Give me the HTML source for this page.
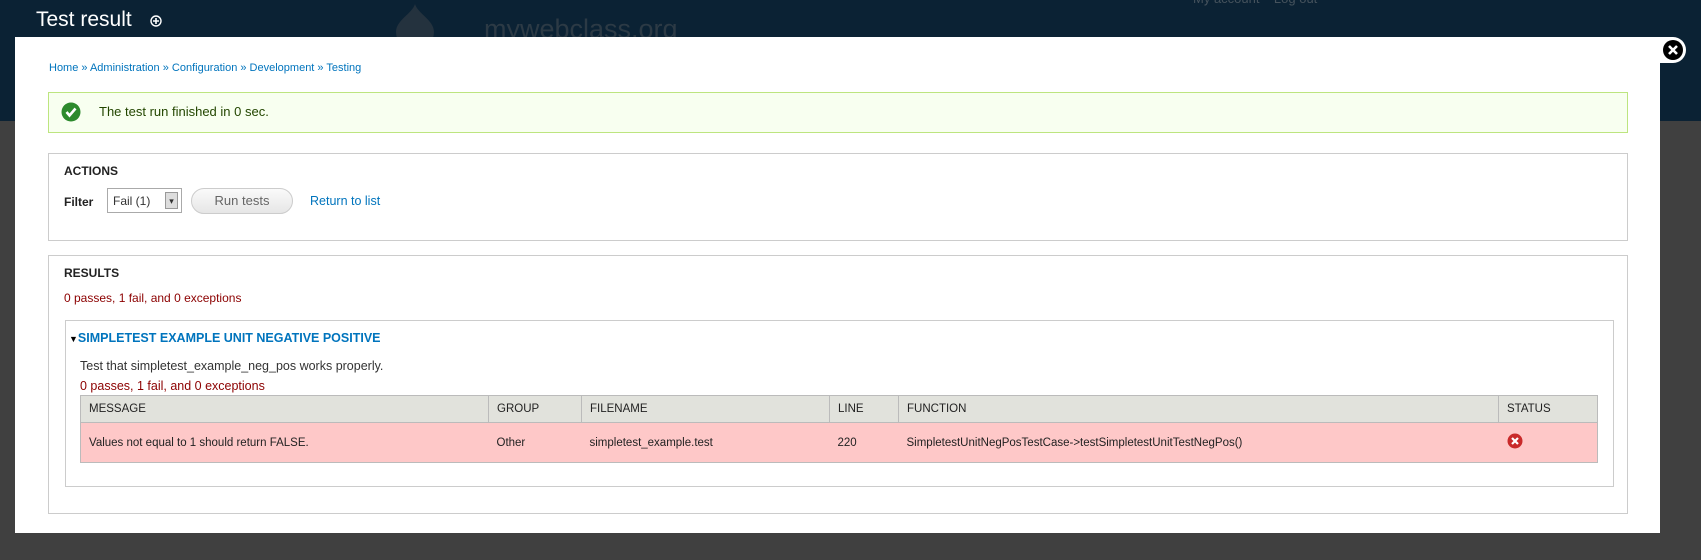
<!DOCTYPE html>
<html><head><meta charset="utf-8"><style>
*{box-sizing:border-box;margin:0;padding:0}
body{width:1701px;height:560px;overflow:hidden;background:#404040;font-family:"Liberation Sans","DejaVu Sans",sans-serif;position:relative}
.hdr{position:absolute;left:0;top:0;width:1701px;height:121px;background:#0b2234}
.abs{position:absolute;white-space:nowrap}
.dlg{position:absolute;left:15px;top:37px;width:1645px;height:496px;background:#fff}
a,.lnk{color:#0074bd;text-decoration:none}
.fs{position:absolute;border:1px solid #ccc}
.lg{font-size:12px;font-weight:bold;color:#222}
.red{color:#8c0000}
table{border-collapse:collapse;position:absolute;font-size:11.5px;color:#222}
td,th{border:1px solid #bbb;text-align:left;font-weight:normal;padding:0 8px}
th{background:#e1e2dc;height:27px}
td{background:#fec8c8;height:40px;border-left:none;border-right:none}
</style></head><body>
<div class="hdr"></div>
<div class="abs" style="left:36px;top:8px;font-size:21px;color:#fff">Test result</div>
<svg class="abs" style="left:150px;top:15px" width="12" height="12"><circle cx="6" cy="6" r="5" fill="none" stroke="#fff" stroke-width="1.4"/><path d="M6 3v6M3 6h6" stroke="#fff" stroke-width="1.6"/></svg>
<svg class="abs" style="left:392px;top:2px" width="46" height="40"><path d="M23 2C20 12 4 18 4 30a19 19 0 0 0 38 0C42 18 26 12 23 2z" fill="#24323e"/></svg>
<div class="abs" style="left:484px;top:14px;font-size:27px;color:#2c3a45">mywebclass.org</div>
<div class="abs" style="left:1193px;top:-9px;font-size:13px;color:#45525c">My account &nbsp;&nbsp; Log out</div>
<div class="dlg">
 <div class="abs" style="left:34px;top:25px;font-size:11px;color:#0074bd">Home » Administration » Configuration » Development » Testing</div>
 <div class="abs" style="left:33px;top:55px;width:1580px;height:41px;border:1px solid #bde57f;background:#f8fff0"></div>
 <svg class="abs" style="left:46px;top:65px" width="20" height="20"><circle cx="10" cy="10" r="9.5" fill="#2d8a2d"/><path d="M5.5 10l3 3.5 6-7" fill="none" stroke="#fff" stroke-width="2.6"/></svg>
 <div class="abs" style="left:84px;top:67px;font-size:13px;color:#234600">The test run finished in 0 sec.</div>
 <div class="fs" style="left:33px;top:116px;width:1580px;height:88px"></div>
 <div class="abs lg" style="left:49px;top:127px">ACTIONS</div>
 <div class="abs lg" style="left:49px;top:158px">Filter</div>
 <div class="abs" style="left:92px;top:151px;width:75px;height:25px;border:1px solid #aaa;font-size:12px;color:#333;padding:5px 5px">Fail (1)<span style="position:absolute;right:3px;top:3px;width:13px;height:17px;border:1px solid #999;background:#ddd;font-size:9px;text-align:center;line-height:16px">▾</span></div>
 <div class="abs" style="left:176px;top:151px;width:102px;height:26px;border:1px solid #ccc;border-radius:13px;background:linear-gradient(#fafafa,#e6e6e6);font-size:13px;color:#666;text-align:center;line-height:24px">Run tests</div>
 <div class="abs lnk" style="left:295px;top:157px;font-size:12.5px">Return to list</div>
 <div class="fs" style="left:33px;top:218px;width:1580px;height:259px"></div>
 <div class="abs lg" style="left:49px;top:229px">RESULTS</div>
 <div class="abs red" style="left:49px;top:254px;font-size:12px">0 passes, 1 fail, and 0 exceptions</div>
 <div class="fs" style="left:50px;top:283px;width:1549px;height:167px"></div>
 <div class="abs" style="left:54px;top:294px;font-size:12.5px;font-weight:bold;color:#0074bd"><span style="color:#000;font-size:9px">▼</span>SIMPLETEST EXAMPLE UNIT NEGATIVE POSITIVE</div>
 <div class="abs" style="left:65px;top:322px;font-size:12.5px;color:#333">Test that simpletest_example_neg_pos works properly.</div>
 <div class="abs red" style="left:65px;top:342px;font-size:12.5px">0 passes, 1 fail, and 0 exceptions</div>
 <table style="left:65px;top:358px;width:1518px">
  <tr><th style="width:408px">MESSAGE</th><th style="width:93px">GROUP</th><th style="width:248px">FILENAME</th><th style="width:69px">LINE</th><th style="width:600px">FUNCTION</th><th>STATUS</th></tr>
  <tr><td style="border-left:1px solid #bbb">Values not equal to 1 should return FALSE.</td><td>Other</td><td>simpletest_example.test</td><td>220</td><td>SimpletestUnitNegPosTestCase-&gt;testSimpletestUnitTestNegPos()</td><td style="border-right:1px solid #bbb"><svg width="16" height="16"><circle cx="8" cy="8" r="7.5" fill="#c92a2a"/><path d="M5 5l6 6M11 5l-6 6" stroke="#fff" stroke-width="2.2"/></svg></td></tr>
 </table>
</div>
<div class="abs" style="left:1660px;top:37px;width:26px;height:26px;background:#fff;border-radius:50%"></div>
<div class="abs" style="left:1660px;top:37px;width:13px;height:26px;background:#fff"></div>
<svg class="abs" style="left:1661px;top:38px" width="24" height="24"><circle cx="12" cy="12" r="10" fill="#000"/><path d="M8 8l8 8M16 8l-8 8" stroke="#fff" stroke-width="2.6"/></svg>
</body></html>
